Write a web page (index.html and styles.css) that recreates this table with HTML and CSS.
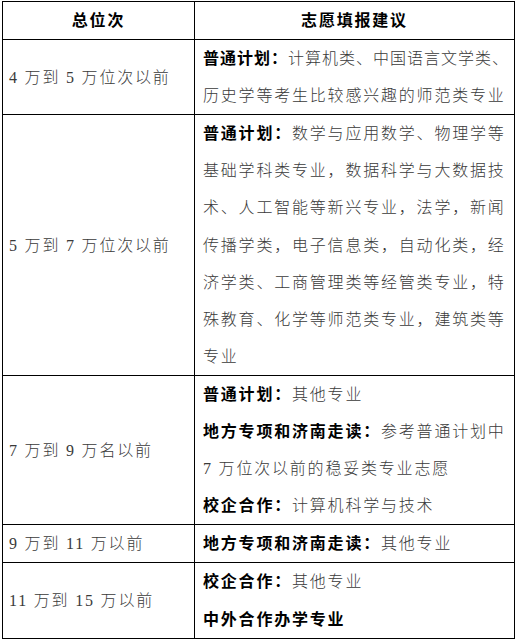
FILE: index.html
```html
<!DOCTYPE html>
<html lang="zh-CN">
<head>
<meta charset="utf-8">
<title>志愿填报建议</title>
<link rel="stylesheet" href="styles.css">
</head>
<body>
<table class="plan">
  <colgroup>
    <col class="col-rank">
    <col class="col-advice">
  </colgroup>
  <thead>
    <tr>
      <th>总位次</th>
      <th>志愿填报建议</th>
    </tr>
  </thead>
  <tbody>
    <tr>
      <td class="rank">4 万到 5 万位次以前</td>
      <td class="advice"><span class="tight"><b>普通计划：</b>计算机类、中国语言文学类、</span><br>历史学等考生比较感兴趣的师范类专业</td>
    </tr>
    <tr>
      <td class="rank">5 万到 7 万位次以前</td>
      <td class="advice"><b>普通计划：</b>数学与应用数学、物理学等基础学科类专业，数据科学与大数据技术、人工智能等新兴专业，法学，新闻传播学类，电子信息类，自动化类，经济学类、工商管理类等经管类专业，特殊教育、化学等师范类专业，建筑类等专业</td>
    </tr>
    <tr>
      <td class="rank">7 万到 9 万名以前</td>
      <td class="advice">
        <div><b>普通计划：</b>其他专业</div>
        <div><b>地方专项和济南走读：</b>参考普通计划中 7 万位次以前的稳妥类专业志愿</div>
        <div><b>校企合作：</b>计算机科学与技术</div>
      </td>
    </tr>
    <tr>
      <td class="rank">9 万到 11 万以前</td>
      <td class="advice"><b>地方专项和济南走读：</b>其他专业</td>
    </tr>
    <tr>
      <td class="rank">11 万到 15 万以前</td>
      <td class="advice">
        <div><b>校企合作：</b>其他专业</div>
        <div><b>中外合作办学专业</b></div>
      </td>
    </tr>
  </tbody>
</table>
</body>
</html>
```
FILE: styles.css
```css
html, body {
  margin: 0;
  padding: 0;
  background: #ffffff;
}

body {
  font-family: "Liberation Serif", "Noto Sans CJK SC", serif;
  font-size: 16px;
  color: #3a3a3a;
}

.plan {
  border-collapse: collapse;
  table-layout: fixed;
  width: 513px;
  margin: 1px 0 0 2px;
}

.col-rank {
  width: 192px;
}

.plan th,
.plan td {
  border: 1px solid #000000;
  line-height: 37.1px;
  padding: 0;
  vertical-align: middle;
  letter-spacing: 1.8px;
}

.plan th {
  font-weight: 700;
  color: #000000;
  text-align: center;
}

.rank {
  padding-left: 6px !important;
  font-weight: 300;
}

.advice {
  padding: 0 4px 0 8px !important;
  font-weight: 300;
}

.advice b {
  font-weight: 700;
  color: #000000;
}

.tight {
  letter-spacing: 1px;
}
```
